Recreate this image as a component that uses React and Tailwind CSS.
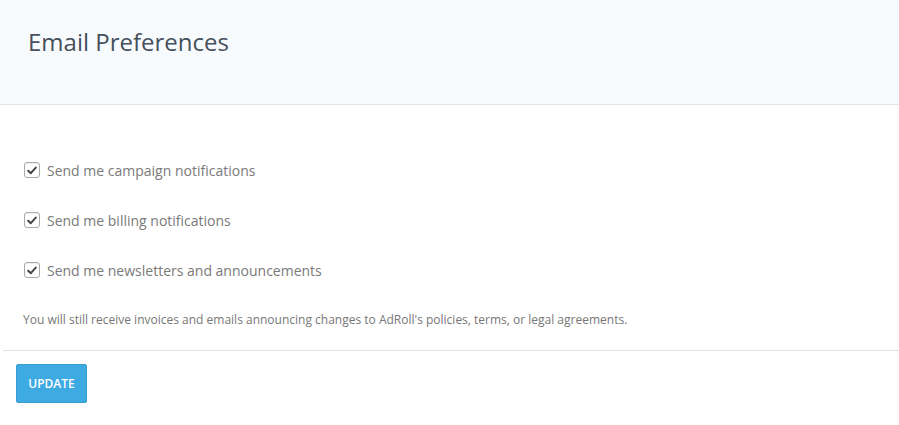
import React from "react";

function Check({ label }) {
  return (
    <label className="flex items-center h-[50px]">
      <span className="w-[16px] h-[16px] rounded-[3px] border border-[#a9a9a9] bg-white flex items-center justify-center shadow-[inset_0_1px_1px_rgba(0,0,0,0.08)]">
        <svg width="10" height="9" viewBox="0 0 10 9">
          <path d="M1.2 4.8 L3.8 7.2 L8.8 1.6" fill="none" stroke="#444" strokeWidth="2" strokeLinecap="round" strokeLinejoin="round" />
        </svg>
      </span>
      <span className="ml-[7px] text-[14px] text-[#7a7a7a]">{label}</span>
    </label>
  );
}

export default function App() {
  return (
    <div className="w-[899px] h-[425px] bg-white" style={{ fontFamily: '"Open Sans", sans-serif' }}>
      <div className="h-[105px] bg-[#f7fbfe] border-b border-[#e1e5e8] pl-[28px] pt-[25px]">
        <h1 className="text-[24px] leading-[34px] text-[#46505c]">Email Preferences</h1>
      </div>
      <div className="pl-[24px] pt-[40px]">
        <Check label="Send me campaign notifications" />
        <Check label="Send me billing notifications" />
        <Check label="Send me newsletters and announcements" />
      </div>
      <div className="pl-[23px] pt-[16px] h-[55px] text-[12px] text-[#777]">
        You will still receive invoices and emails announcing changes to AdRoll's policies, terms, or legal agreements.
      </div>
      <div className="ml-[3px] border-t border-[#e2e2e2]" />
      <div className="pl-[16px] pt-[13px]">
        <button className="w-[71px] h-[39px] bg-[#3eaae2] border border-[#3a9bcf] rounded-[2px] text-white text-[12px] font-semibold">
          UPDATE
        </button>
      </div>
    </div>
  );
}
